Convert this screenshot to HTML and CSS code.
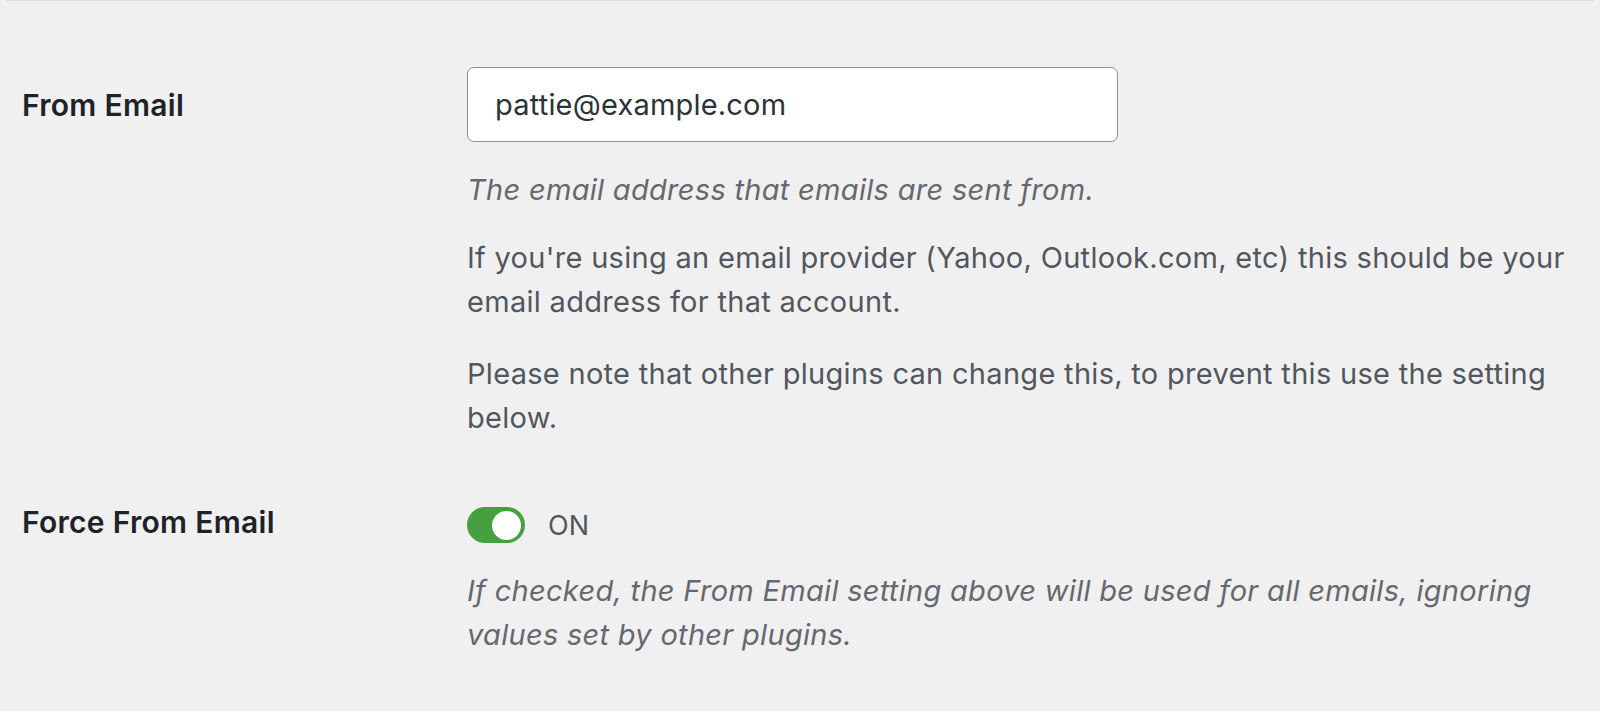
FILE: index.html
```html
<!DOCTYPE html>
<html lang="en">
<head>
  <meta charset="UTF-8">
  <meta name="viewport" content="width=device-width, initial-scale=1.0">
  <title>Mail Settings</title>
  <link rel="stylesheet" href="styles.css">
</head>
<body>
  <div class="settings">
    <div class="row">
      <label class="row-label" for="from-email">From Email</label>
      <div class="row-field">
        <input type="text" id="from-email" class="text-input" value="pattie@example.com">
        <p class="description">The email address that emails are sent from.</p>
        <p class="note">If you're using an email provider (Yahoo, Outlook.com, etc) this should be your email address for that account.</p>
        <p class="note">Please note that other plugins can change this, to prevent this use the setting below.</p>
      </div>
    </div>

    <div class="row">
      <label class="row-label" for="force-email">Force From Email</label>
      <div class="row-field">
        <div class="toggle-line">
          <span class="toggle"><span class="knob"></span></span>
          <span class="toggle-text">ON</span>
        </div>
        <p class="description">If checked, the From Email setting above will be used for all emails, ignoring values set by other plugins.</p>
      </div>
    </div>
  </div>
</body>
</html>
```

FILE: styles.css
```css
body {
  margin: 0;
  background-color: #f0f0f1;
  font-family: Inter, Roboto, "Liberation Sans", sans-serif;
  color: #50575e;
}

.settings {
  margin: 0 6px;
  border-top: 1px solid #dcdcde;
}

.row {
  display: flex;
  padding-top: 66px;
}

.row + .row {
  padding-top: 46px;
}

.row-label {
  width: 445px;
  padding-left: 16px;
  margin-top: 16px;
  font-size: 30px;
  line-height: 44px;
  font-weight: 600;
  letter-spacing: 0.3px;
  color: #1d2327;
  flex-shrink: 0;
}

.row + .row .row-label {
  margin-top: 14px;
}

.row-field {
  width: 1120px;
}

.text-input {
  display: block;
  box-sizing: border-box;
  width: 651px;
  height: 75px;
  margin: 0;
  padding: 0 27px;
  border: 1.5px solid #8c8f94;
  border-radius: 7px;
  background-color: #fff;
  font-family: inherit;
  font-size: 29px;
  letter-spacing: 0.2px;
  color: #2c3338;
  outline: none;
}

p {
  margin: 24px 0 0;
  font-size: 29px;
  line-height: 44px;
  letter-spacing: 0.3px;
}

.description {
  margin-top: 26px;
  font-style: italic;
  color: #646970;
}

.note + .note {
  margin-top: 28px;
}

.toggle-line {
  display: flex;
  align-items: center;
  gap: 23px;
  margin-top: 21px;
}

.toggle {
  display: flex;
  align-items: center;
  justify-content: flex-end;
  box-sizing: border-box;
  width: 58px;
  height: 36px;
  padding-right: 4px;
  border-radius: 18px;
  background-color: #45a13f;
}

.knob {
  width: 29px;
  height: 29px;
  border-radius: 50%;
  background-color: #fff;
}

.toggle-text {
  font-size: 27px;
  color: #50575e;
}
```
